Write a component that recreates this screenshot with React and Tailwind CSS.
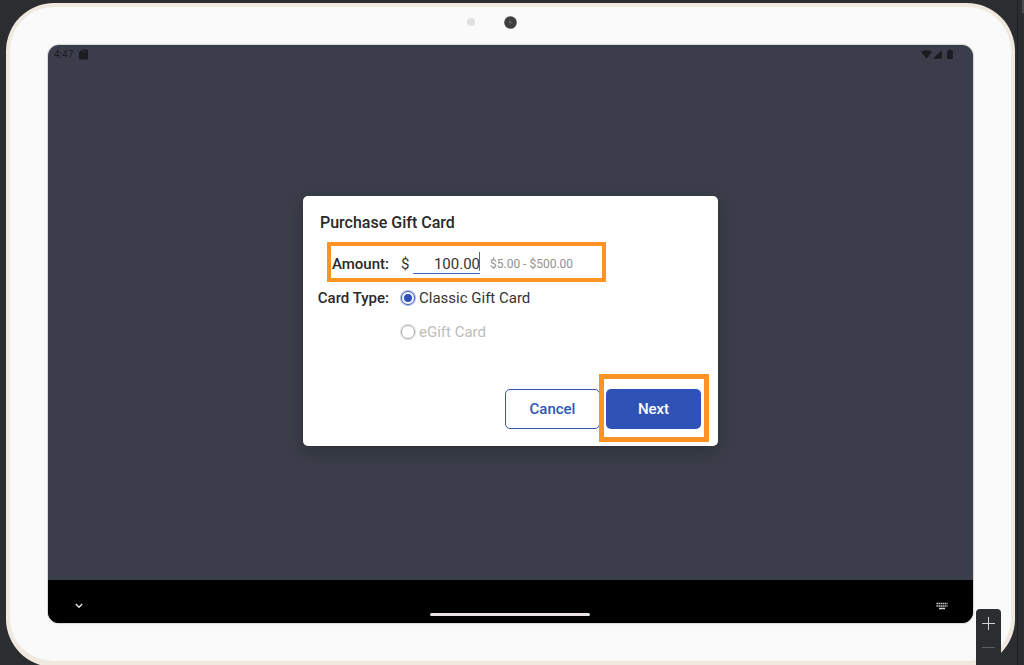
import React, { useState } from "react";

function StatusBar() {
  return (
    <header className="flex h-4 shrink-0 items-center justify-between pt-[3px] pr-5 pl-1.5 text-[#1a1c22]">
      <div className="flex items-center gap-[6px]">
        <time className="text-[10px] leading-3">4:47</time>
        <svg width="9" height="11" viewBox="0 0 9 11" fill="currentColor" aria-hidden="true">
          <path d="M3 .5H8a1 1 0 0 1 1 1V9.500a1 1 0 0 1-1 1H1a1 1 0 0 1-1-1V3.500Z" />
          <path d="M3.500 1.500v2M5.200 1.500v2M6.900 1.500v2" stroke="#3b3e4a" strokeWidth=".7" />
        </svg>
      </div>
      <div className="flex items-center">
        <svg width="32" height="11" viewBox="0 0 32 11" fill="currentColor" aria-hidden="true">
          <path d="M0 2.800Q5.500-1 11 2.800L5.500 9.800Z" />
          <path d="M12 9.800L20.800 1V9.800Z" />
          <path d="M28 .5h2v1h1.200a.6.6 0 0 1 .6.600V9.400a.6.6 0 0 1-.6.600H26.800a.6.6 0 0 1-.6-.6V2.100a.6.6 0 0 1 .6-.6H28Z" />
        </svg>
      </div>
    </header>
  );
}

function NavigationBar() {
  return (
    <footer className="grid h-[43px] shrink-0 grid-cols-3 items-center bg-black pt-2 text-white">
      <button type="button" aria-label="Back" className="ml-[25px] flex w-3 justify-center">
        <svg width="8" height="6" viewBox="0 0 8 6" fill="none" stroke="#e6e6e6" strokeWidth="1.400">
          <path d="M.8 1L4 4.300L7.200 1" />
        </svg>
      </button>
      <div className="mt-[18px] h-[3px] w-40 justify-self-center rounded-full bg-[#e9e5e6]" />
      <button type="button" aria-label="Switch keyboard" className="mr-[25px] justify-self-end">
        <svg width="12" height="8" viewBox="0 0 12 8" fill="none" stroke="#d6d6d6">
          <path d="M.5 1.500H11.500M.5 4H11.500" strokeWidth="1.400" strokeDasharray="1.400 .6" />
          <path d="M3 6.500H9" strokeWidth="1.600" />
        </svg>
      </button>
    </footer>
  );
}

function CardTypeOption({ label, value, checked, disabled, onChange }) {
  return (
    <label
      className={
        disabled
          ? "flex h-5 items-center gap-1 text-[15px] leading-5 text-[#bdbdbd]"
          : "flex h-5 items-center gap-1 text-[15px] leading-5 text-[#353535]"
      }
    >
      <input
        type="radio"
        name="card-type"
        value={value}
        checked={checked}
        disabled={disabled}
        onChange={onChange}
        className="grid size-[14px] appearance-none place-content-center rounded-full border border-[#3056b8] ring-1 ring-[#3056b8]/40 before:size-2 before:rounded-full before:bg-transparent checked:before:bg-[#2f52b6] disabled:border-[#adadad] disabled:ring-[#adadad]/40"
      />
      {label}
    </label>
  );
}

function GiftCardDialog() {
  const [amount, setAmount] = useState("100.00");
  const [type, setType] = useState("classic");

  return (
    <form
      role="dialog"
      aria-labelledby="dialog-title"
      onSubmit={(event) => event.preventDefault()}
      className="w-[415px] rounded-[5px] bg-white p-[17px] text-[#292929] shadow-[0_5px_16px_rgba(20,22,30,0.35)]"
    >
      <h1 id="dialog-title" className="text-base leading-5 font-medium">
        Purchase Gift Card
      </h1>

      <div className="relative mt-[21px] flex h-5 items-center text-[15px] leading-5">
        <label htmlFor="amount" className="w-[69px] text-right font-medium">
          Amount:
        </label>
        <span className="ml-3 w-3 text-[#353535]">$</span>
        <div className="relative h-5 w-[67px] border-b border-[#3f66cf] text-[#353535]">
          <input
            id="amount"
            inputMode="decimal"
            value={amount}
            onChange={(event) => setAmount(event.target.value)}
            className="block h-5 w-full bg-transparent text-right outline-none"
          />
          <span className="absolute -top-0.5 right-0 h-[19px] w-px bg-[#3f66cf]" />
        </div>
        <span className="ml-[10px] text-xs text-[#929292]">$5.00 - $500.00</span>
        <div className="pointer-events-none absolute -top-3 left-[7px] h-10 w-[279px] border-4 border-[#ff9326]" />
      </div>

      <fieldset className="mt-[14px] flex text-[15px]">
        <legend className="float-left w-[69px] text-right leading-5 font-medium">
          <span className="float-right whitespace-nowrap">Card Type:</span>
        </legend>
        <div className="ml-3 flex flex-col gap-[14px]">
          <CardTypeOption
            label="Classic Gift Card"
            value="classic"
            checked={type === "classic"}
            onChange={() => setType("classic")}
          />
          <CardTypeOption
            label="eGift Card"
            value="egift"
            checked={type === "egift"}
            disabled
            onChange={() => setType("egift")}
          />
        </div>
      </fieldset>

      <div className="mt-[47px] flex justify-end gap-[6px] text-[15px] font-medium">
        <button
          type="button"
          className="h-10 w-[95px] rounded-[5px] border border-[#3056b8] pt-0.5 text-[#3056b8]"
        >
          Cancel
        </button>
        <div className="relative">
          <button type="submit" className="h-10 w-[95px] rounded-[5px] bg-[#2f52b6] pt-0.5 text-white">
            Next
          </button>
          <div className="pointer-events-none absolute -top-[15px] -left-[7px] h-[68px] w-[110px] border-[5px] border-[#ff9326]" />
        </div>
      </div>
    </form>
  );
}

function ZoomControls() {
  return (
    <div className="absolute right-[23px] bottom-0 flex h-14 w-[25px] flex-col items-center gap-3 rounded-t-[4px] bg-[#2b2d30] pt-2">
      <button type="button" aria-label="Zoom in">
        <svg width="13" height="13" viewBox="0 0 13 13" stroke="#ced0d6" className="block">
          <path d="M6.500 0V13M0 6.500H13" />
        </svg>
      </button>
      <button type="button" aria-label="Zoom out">
        <svg width="13" height="13" viewBox="0 0 13 13" stroke="#5c5e62" className="block">
          <path d="M0 5.500H13" />
        </svg>
      </button>
    </div>
  );
}

export default function App() {
  return (
    <div className="relative flex min-h-screen flex-col overflow-hidden bg-[#2b2d30] pt-[3px] pr-[9px] pl-[6px] font-['Roboto',sans-serif]">
      <div className="absolute inset-y-0 right-0 w-[7px] border-l border-[#1e1f22]">
        <div className="absolute top-0 right-0 h-[13px] w-[2px] bg-[#4a4b4e]" />
      </div>
      <div className="relative -mb-[2px] flex flex-1 flex-col rounded-[48px] border-4 border-b-[6px] border-[#efe9df] bg-[#fafafa] px-[38px] pb-[38px]">
        <div className="grid h-[38px] shrink-0 grid-cols-[1fr_13px_1fr] items-center pb-2">
          <div className="mr-[29px] size-2 justify-self-end rounded-full bg-[#e0e0e0]" />
          <svg width="13" height="13" viewBox="0 0 13 13" aria-hidden="true">
            <circle cx="6.500" cy="6.500" r="6.300" fill="#3f3f3f" />
            <circle cx="6" cy="6" r=".8" fill="#999" />
            <circle cx="7.500" cy="7" r=".6" fill="#777" />
          </svg>
        </div>
        <main className="flex flex-1 flex-col overflow-hidden rounded-[11px] bg-[#3b3e4a] shadow-[0_0_1px_1px_#d5d5d5]">
          <StatusBar />
          <div className="flex flex-1 items-center justify-center">
            <GiftCardDialog />
          </div>
          <NavigationBar />
        </main>
      </div>
      <ZoomControls />
    </div>
  );
}
